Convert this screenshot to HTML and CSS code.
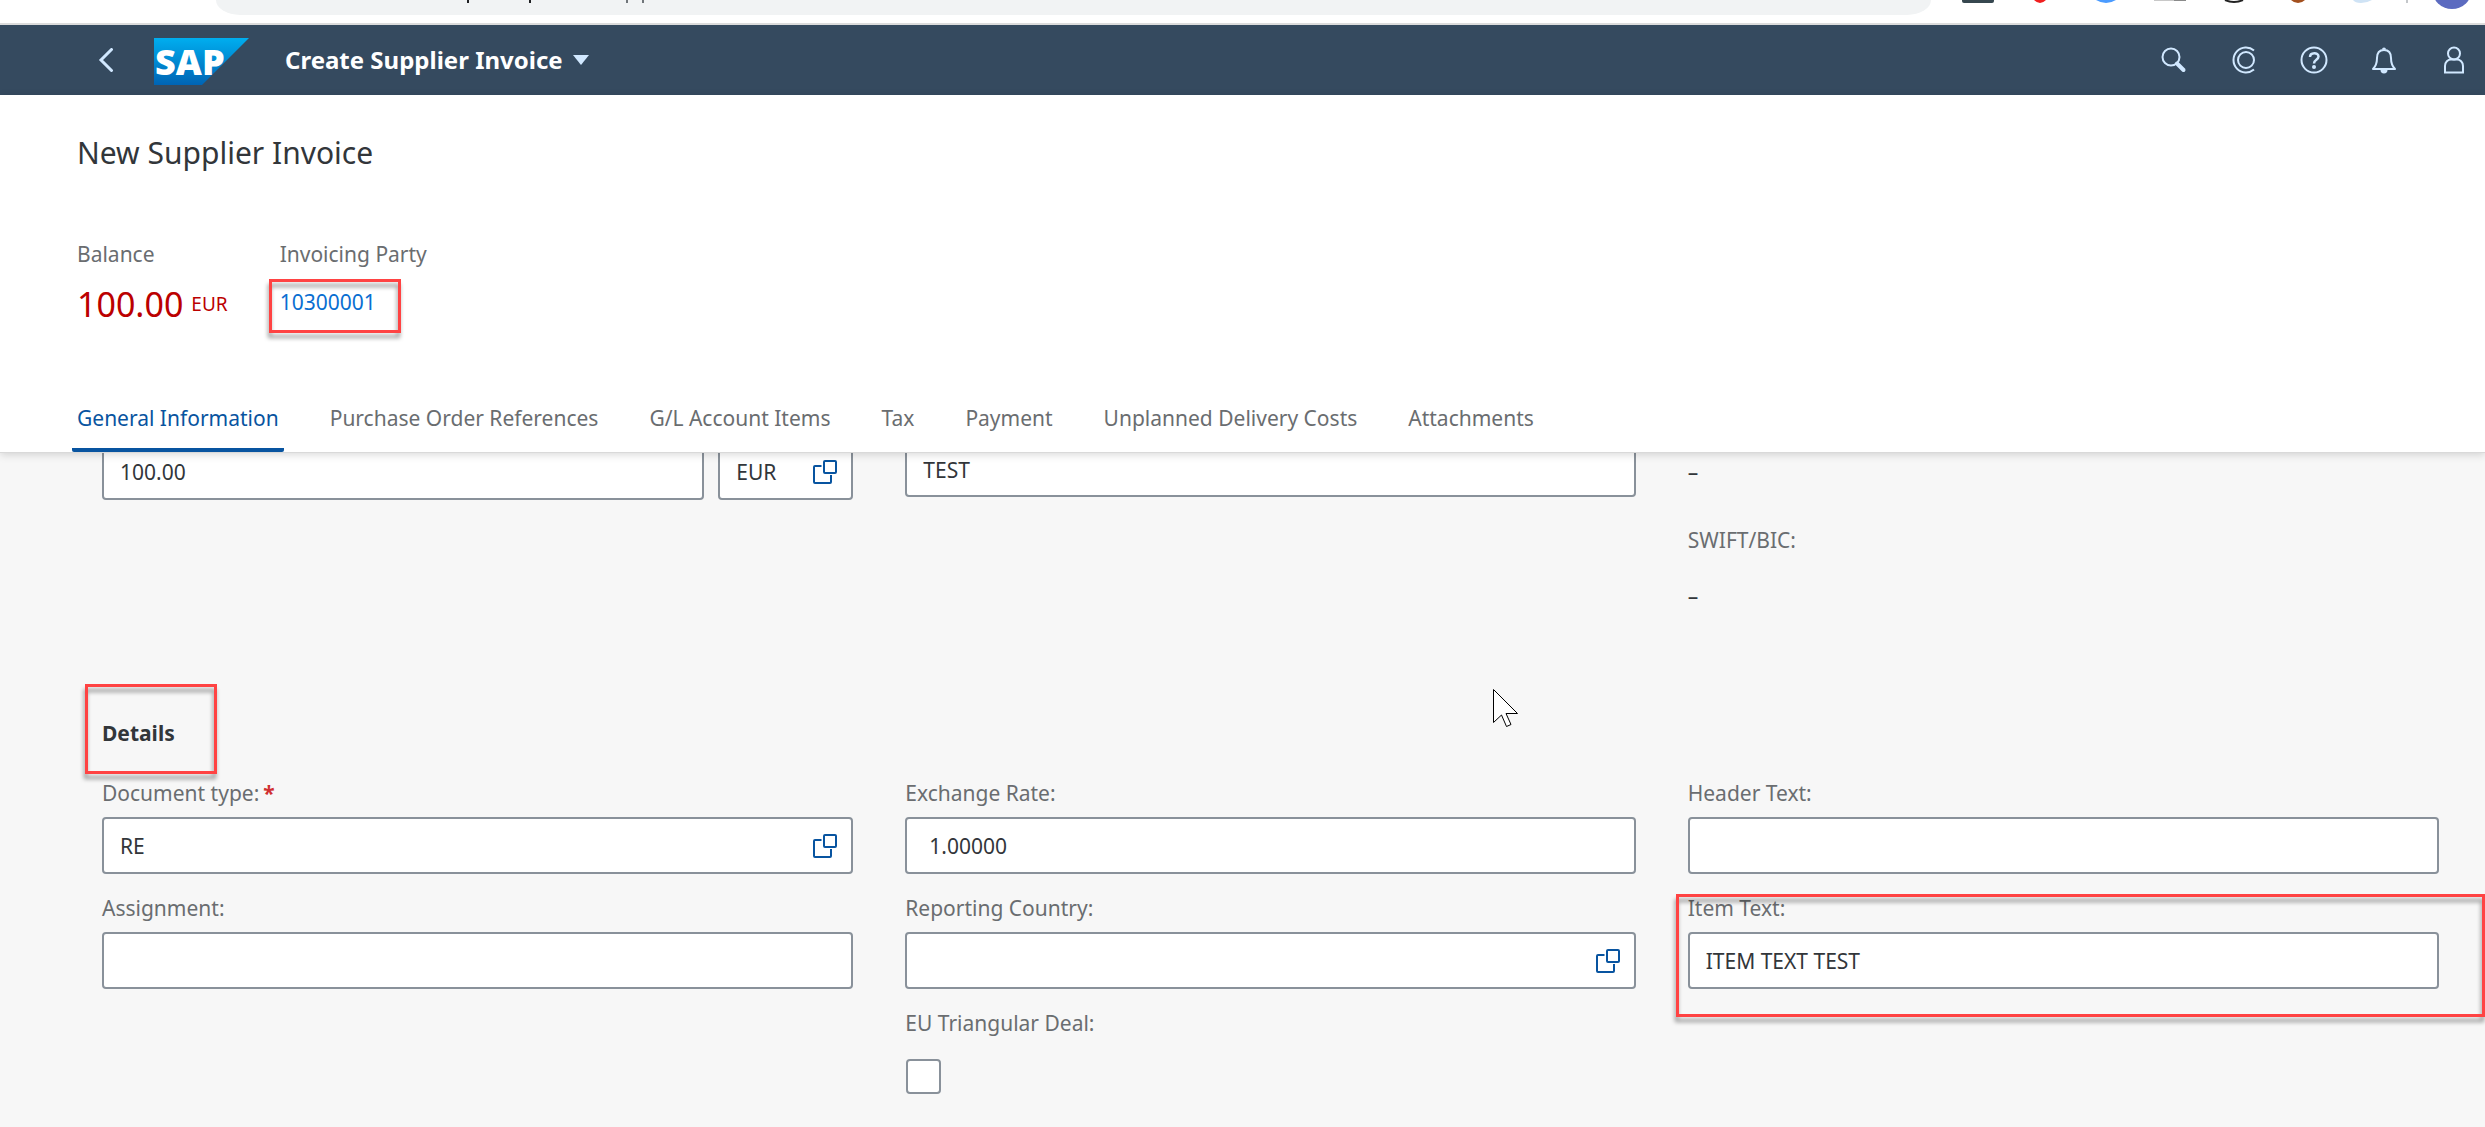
FILE: index.html
```html
<!DOCTYPE html>
<html lang="en">
<head>
    <meta charset="UTF-8">
    <meta name="viewport" content="width=device-width, initial-scale=1.0">
    <title>Create Supplier Invoice</title>
    <link rel="stylesheet" href="styles.css">
</head>
<body>
    <!-- shared icons -->
    <svg class="sprite" aria-hidden="true">
      <symbol id="value-help" viewBox="0 0 24 24">
        <path d="M8.500 6H2a1 1 0 0 0-1 1V22a1 1 0 0 0 1 1H17a1 1 0 0 0 1-1V15" />
        <rect x="11" y="1" width="12" height="12" rx="1" />
      </symbol>
    </svg>

    <div class="browser-bar">
      <div class="address">
        <svg width="700" height="4" viewBox="0 0 700 4" aria-hidden="true">
          <path d="M252 0v3M314 0v3" stroke="#202124" stroke-width="2" />
          <path d="M411 0v3M427 0v3" stroke="#70757a" stroke-width="2" />
        </svg>
      </div>
      <svg class="extensions" width="554" height="10" viewBox="0 0 554 10" aria-hidden="true">
        <path d="M31 0h32v1a2 2 0 0 1-2 2H33a2 2 0 0 1-2-2z" fill="#36474f" />
        <path d="M103 0h12q-3 3-6 3t-6-3z" fill="#f01f1f" />
        <path d="M165 0h20q-5 3-10 3t-10-3z" fill="#4a9bff" />
        <path d="M223 0h20v1h-20z" fill="#c8c8c8" />
        <path d="M243 0h12v1h-12z" fill="#8a8a8a" />
        <path d="M294 0q9 4 18 0" fill="none" stroke="#222" stroke-width="2" />
        <path d="M360 0h14q-3 3-7 3t-7-3z" fill="#a3501f" />
        <path d="M422 0h19q-5 3-11 3t-8-3z" fill="#cfe3f5" />
        <path d="M476 0v3" stroke="#c4c7ca" stroke-width="2" />
        <circle cx="521" cy="-11" r="20" fill="#5c6bc0" />
      </svg>
    </div>

    <header class="shell-bar">
      <button class="shell-btn back" aria-label="Back">
        <svg width="16" height="24" viewBox="0 0 16 24"><path d="M13.500 1.500L3 12l10.500 10.500" stroke-width="3" stroke-linecap="round" /></svg>
      </button>
      <a class="logo" href="#" aria-label="SAP">
        <svg width="95" height="47" viewBox="0 0 95 47">
          <defs>
            <linearGradient id="sap" x1="0" y1="0" x2="0" y2="1">
              <stop offset="0" stop-color="#00aeef" />
              <stop offset="1" stop-color="#0064b4" />
            </linearGradient>
          </defs>
          <path d="M0 0h95L48 47H0z" fill="url(#sap)" />
          <text x="1" y="37">SAP</text>
        </svg>
      </a>
      <button class="app-title">Create Supplier Invoice
        <svg width="16" height="10" viewBox="0 0 16 10"><path d="M0 0h16L8 10z" /></svg>
      </button>
      <div class="shell-actions">
        <button class="shell-btn" aria-label="Search">
          <svg width="28" height="28" viewBox="0 0 28 28"><circle cx="11" cy="11" r="8.500" /><path d="M17 17.500l6.500 6.500" stroke-width="4" stroke-linecap="round" /></svg>
        </button>
        <button class="shell-btn" aria-label="CoPilot">
          <svg width="28" height="28" viewBox="0 0 28 28"><circle cx="16" cy="14" r="8" /><path d="M24 4.400A12.500 12.500 0 1 0 24 23.600" /></svg>
        </button>
        <button class="shell-btn" aria-label="Help">
          <svg width="28" height="28" viewBox="0 0 28 28"><circle cx="14" cy="14" r="12.500" /><path d="M10 11c0-5 8.500-5 8.500-.5 0 3.500-4.500 3-4.500 7" stroke-width="2.500" /><circle class="dot" cx="14" cy="21" r="2" /></svg>
        </button>
        <button class="shell-btn" aria-label="Notifications">
          <svg width="28" height="28" viewBox="0 0 28 28"><path d="M3 23c3-3 4-6 4-11 0-5 2.500-8 7-8s7 3 7 8c0 5 1 8 4 11z" stroke-linejoin="round" /><path class="dot" d="M12 3.500a2 2 0 0 1 4 0zM10.500 24h7a3.500 3.500 0 0 1-7 0z" /></svg>
        </button>
        <button class="shell-btn" aria-label="User">
          <svg width="28" height="28" viewBox="0 0 28 28"><circle cx="14" cy="7.500" r="6" /><path d="M5 26.500V20c0-4 3-6.500 6-6.500h6c3 0 6 2.500 6 6.500v6.500z" /></svg>
        </button>
      </div>
    </header>

    <section class="object-header">
      <h1>New Supplier Invoice</h1>
      <div class="facts">
        <div class="fact">
          <div class="fact-label">Balance</div>
          <div class="amount">100.00<span>EUR</span></div>
        </div>
        <div class="fact">
          <div class="fact-label">Invoicing Party</div>
          <div class="party">
            <a href="#">10300001</a>
            <div class="mark mark-party"></div>
          </div>
        </div>
      </div>
      <nav class="tabs">
        <a class="active" href="#">General Information</a>
        <a href="#">Purchase Order References</a>
        <a href="#">G/L Account Items</a>
        <a href="#">Tax</a>
        <a href="#">Payment</a>
        <a href="#">Unplanned Delivery Costs</a>
        <a href="#">Attachments</a>
      </nav>
    </section>

    <main>
      <section class="columns basic">
        <div class="amount-row">
          <div class="box"><input type="text" value="100.00" aria-label="Gross Invoice Amount"></div>
          <div class="box currency">
            <input type="text" value="EUR" aria-label="Currency">
            <button class="help" aria-label="Select currency"><svg><use href="#value-help" /></svg></button>
          </div>
        </div>
        <div class="box reference"><input type="text" value="TEST" aria-label="Reference"></div>
        <div class="bank">
          <div class="value">–</div>
          <div class="label">SWIFT/BIC:</div>
          <div class="value">–</div>
        </div>
      </section>

      <section class="details">
        <h2>Details<div class="mark mark-details"></div></h2>
        <div class="columns">
          <div class="column">
            <div class="field">
              <label for="doc-type">Document type:<span class="required">*</span></label>
              <div class="box">
                <input type="text" id="doc-type" value="RE">
                <button class="help" aria-label="Select document type"><svg><use href="#value-help" /></svg></button>
              </div>
            </div>
            <div class="field">
              <label for="assignment">Assignment:</label>
              <div class="box"><input type="text" id="assignment"></div>
            </div>
          </div>
          <div class="column">
            <div class="field">
              <label for="rate">Exchange Rate:</label>
              <div class="box rate"><input type="text" id="rate" value="1.00000"></div>
            </div>
            <div class="field">
              <label for="country">Reporting Country:</label>
              <div class="box">
                <input type="text" id="country">
                <button class="help" aria-label="Select country"><svg><use href="#value-help" /></svg></button>
              </div>
            </div>
            <div class="field">
              <label for="eu-deal">EU Triangular Deal:</label>
              <input type="checkbox" id="eu-deal">
            </div>
          </div>
          <div class="column">
            <div class="field">
              <label for="header-text">Header Text:</label>
              <div class="box"><input type="text" id="header-text"></div>
            </div>
            <div class="field">
              <label for="item-text">Item Text:</label>
              <div class="box"><input type="text" id="item-text" value="ITEM TEXT TEST"></div>
              <div class="mark mark-item"></div>
            </div>
          </div>
        </div>
      </section>
    </main>

    <svg class="cursor" width="27" height="40" viewBox="-1 -1 27 40" aria-hidden="true">
      <path d="M.5.5v33l8-7.500 5 11.500 4.500-2L13 24.500h11.500z" />
    </svg>
</body>
</html>
```
FILE: styles.css
```css
* {
  margin: 0;
  padding: 0;
  box-sizing: border-box;
}

body {
  position: relative;
  min-height: 100vh;
  overflow-x: hidden;
  font-family: "Noto Sans", Arial, sans-serif;
  font-size: 21px;
  line-height: 32px;
  color: #32363a;
  background-color: #f7f7f7;
}

button,
input {
  font: inherit;
  color: inherit;
  border: none;
  outline: none;
  background: none;
}

button {
  cursor: pointer;
}

a {
  text-decoration: none;
}

svg {
  display: block;
}

.sprite {
  position: absolute;
  width: 0;
  height: 0;
}

/* browser strip */
.browser-bar {
  display: flex;
  align-items: flex-start;
  height: 25px;
  padding-left: 216px;
  background-color: #fff;
  border-bottom: 2px solid #dcdcdc;
}

.address {
  flex: 1;
  height: 15px;
  background-color: #f1f3f4;
  border-radius: 0 0 24px 24px / 0 0 15px 15px;
}

.extensions {
  flex: none;
}

/* shell bar */
.shell-bar {
  display: flex;
  align-items: center;
  height: 70px;
  padding: 0 17px 0 98px;
  background-color: #354a5f;
}

.shell-btn svg {
  fill: none;
  stroke: #d1e8ff;
  stroke-width: 2;
}

.shell-btn .dot {
  fill: #d1e8ff;
  stroke: none;
}

.logo {
  margin: 3px 36px 0 40px;
}

.logo svg {
  overflow: visible;
}

.logo text {
  font-size: 36px;
  font-weight: 900;
  fill: #fff;
}

.app-title {
  display: flex;
  align-items: center;
  gap: 10px;
  font-size: 24px;
  font-weight: bold;
  color: #fff;
}

.app-title svg {
  fill: #d1e8ff;
}

.shell-actions {
  display: flex;
  gap: 42px;
  margin-left: auto;
}

/* object header */
.object-header {
  position: relative;
  z-index: 1;
  padding: 38px 77px 0;
  background-color: #fff;
  border-bottom: 1px solid #d9d9d9;
  box-shadow: 0 2px 8px rgba(0, 0, 0, 0.15);
}

h1 {
  font-size: 30px;
  font-weight: normal;
  line-height: 40px;
}

.facts {
  display: flex;
  gap: 52px;
  margin-top: 65px;
}

.fact-label,
.label,
label {
  color: #6a6d70;
}

.amount {
  display: flex;
  gap: 8px;
  margin-top: 14px;
  font-size: 34px;
  line-height: 40px;
  color: #bb0000;
}

.amount span {
  font-size: 19px;
}

.party {
  position: relative;
  margin-top: 16px;
}

.party a {
  color: #0a6ed1;
}

.tabs {
  display: flex;
  gap: 41px;
  margin: 55px 0 0 -5px;
}

.tabs a {
  padding: 21px 5px 12px;
  line-height: 36px;
  color: #6a6d70;
  border-bottom: 4px solid transparent;
}

.tabs .active {
  color: #0854a0;
  border-bottom-color: #0854a0;
  border-radius: 2px;
}

/* form */
main {
  padding: 0 46px 0 102px;
}

.columns {
  display: grid;
  grid-template-columns: 36fr 35fr 36fr;
  gap: 52px;
  align-items: start;
}

.column {
  display: flex;
  flex-direction: column;
  gap: 18px;
}

.basic {
  margin-top: -10px;
}

.amount-row {
  display: flex;
  gap: 14px;
}

.box {
  display: flex;
  flex: 1;
  align-items: center;
  height: 57px;
  padding: 0 14px 0 16px;
  background-color: #fff;
  border: 2px solid #89919a;
  border-radius: 4px;
}

.box input {
  flex: 1;
  width: 100%;
  min-width: 0;
}

.currency {
  flex: 0 0 135px;
}

.reference {
  height: 54px;
}

.rate {
  padding-left: 22px;
}

.help svg {
  width: 24px;
  height: 24px;
  fill: none;
  stroke: #0854a0;
  stroke-width: 2;
}

.bank {
  padding-top: 13px;
}

.bank .label {
  margin: 36px 0 24px;
}

.details {
  margin-top: 105px;
}

h2 {
  position: relative;
  margin-bottom: 28px;
  font-size: 21px;
  font-weight: bold;
}

.field {
  position: relative;
}

label {
  display: block;
  margin-bottom: 8px;
}

.required {
  margin-left: 4px;
  font-weight: bold;
  color: #d03030;
}

input[type="checkbox"] {
  display: block;
  appearance: none;
  width: 35px;
  height: 35px;
  margin: 20px 0 0 1px;
  background-color: #fff;
  border: 2px solid #89919a;
  border-radius: 4px;
}

/* red highlight frames */
.mark {
  position: absolute;
  border: 3px solid #ff4343;
  filter: drop-shadow(-1px 5px 2px rgba(0, 0, 0, 0.4));
  pointer-events: none;
}

.mark-party {
  top: -7px;
  left: -11px;
  width: 132px;
  height: 54px;
}

.mark-details {
  top: -33px;
  left: -17px;
  width: 132px;
  height: 90px;
}

.mark-item {
  top: 2px;
  right: -46px;
  bottom: -28px;
  left: -12px;
}

.cursor {
  position: absolute;
  top: 688px;
  left: 1492px;
  fill: #fff;
  stroke: #000;
}
```
